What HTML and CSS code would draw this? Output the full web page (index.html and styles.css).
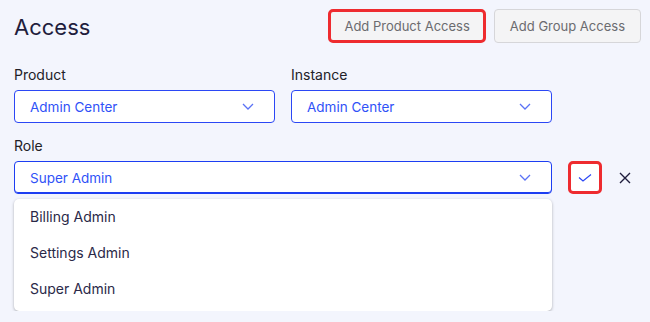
FILE: index.html
```html
<!DOCTYPE html>
<html lang="en">
<head>
    <meta charset="UTF-8">
    <title>Access</title>
    <link rel="stylesheet" href="styles.css">
</head>
<body>

    <!-- header: title + actions -->
    <div class="access-header">
        <h1 class="access-title">Access</h1>
        <div class="header-actions">
            <button class="btn btn-highlight">Add Product Access</button>
            <button class="btn">Add Group Access</button>
        </div>
    </div>

    <!-- product / instance -->
    <div class="field-row">
        <div class="field">
            <label class="field-label">Product</label>
            <div class="select">
                <span>Admin Center</span>
                <svg class="chevron" width="12" height="7" viewBox="0 0 12 7"><path d="M1 1l5 5 5-5" fill="none" stroke="currentColor" stroke-width="1.3"/></svg>
            </div>
        </div>
        <div class="field">
            <label class="field-label">Instance</label>
            <div class="select">
                <span>Admin Center</span>
                <svg class="chevron" width="12" height="7" viewBox="0 0 12 7"><path d="M1 1l5 5 5-5" fill="none" stroke="currentColor" stroke-width="1.3"/></svg>
            </div>
        </div>
    </div>

    <!-- role -->
    <label class="field-label role-label">Role</label>
    <div class="role-row">
        <div class="role-field">
            <div class="select select-open">
                <span>Super Admin</span>
                <svg class="chevron" width="12" height="7" viewBox="0 0 12 7"><path d="M1 1l5 5 5-5" fill="none" stroke="currentColor" stroke-width="1.3"/></svg>
            </div>
            <!-- open options list -->
            <ul class="dropdown">
                <li>Billing Admin</li>
                <li>Settings Admin</li>
                <li>Super Admin</li>
            </ul>
        </div>
        <button class="icon-btn icon-confirm">
            <svg width="14" height="8" viewBox="0 0 14 8"><path d="M1 3.5l4 3.5 8-6.5" fill="none" stroke="currentColor" stroke-width="1.2"/></svg>
        </button>
        <button class="icon-btn icon-cancel">
            <svg width="12" height="12" viewBox="0 0 12 12"><path d="M1 1l10 10M11 1L1 11" fill="none" stroke="currentColor" stroke-width="1.4"/></svg>
        </button>
    </div>

</body>
</html>
```

FILE: styles.css
```css
body {
    margin: 0;
    padding: 9px 9px 0 14px;
    background: #f3f5fd;
    font-family: Inter, "Noto Sans", sans-serif;
    color: #1f1d3d;
}

.access-header {
    display: flex;
    justify-content: space-between;
    align-items: flex-start;
}

.access-title {
    margin: 4px 0 0;
    font-size: 22px;
    font-weight: 400;
    line-height: 28px;
}

.header-actions {
    display: flex;
    gap: 8px;
    align-items: center;
}

.btn {
    height: 34px;
    padding: 0 15px;
    font-family: inherit;
    font-size: 13px;
    color: #6b6b6f;
    background: #f4f4f5;
    border: 1px solid #d6d6d9;
    border-radius: 4px;
}

.btn-highlight {
    padding: 0 13px;
    border: 3px solid #ee2b2f;
    border-radius: 5px;
}

.field-row {
    display: flex;
    gap: 16px;
    width: 538px;
    margin-top: 22px;
}

.field {
    flex: 1;
}

.field-label {
    display: block;
    font-size: 14px;
    line-height: 20px;
    color: #222127;
    margin-bottom: 5px;
}

.role-label {
    margin-top: 13px;
}

.select {
    display: flex;
    align-items: center;
    justify-content: space-between;
    box-sizing: border-box;
    height: 33px;
    padding: 0 20px 0 15px;
    border: 1px solid #2b47f5;
    border-radius: 4px;
    background: #fff;
    font-size: 13.5px;
    color: #2f52f7;
}

.select-open {
    border-color: #1d3ef2;
    box-shadow: inset 0 -1px 0 #1d3ef2;
}

.chevron {
    color: #5a72f5;
}

.role-row {
    display: flex;
    align-items: flex-start;
}

.role-field {
    width: 538px;
}

.dropdown {
    margin: 5px 0 0;
    padding: 0 0 4px;
    list-style: none;
    background: #fff;
    border-radius: 5px;
    box-shadow: 0 1px 3px rgba(0, 0, 0, 0.3);
}

.dropdown li {
    height: 36px;
    line-height: 36px;
    padding-left: 16px;
    font-size: 14px;
    color: #2a2948;
}

.icon-btn {
    display: flex;
    align-items: center;
    justify-content: center;
    padding: 0;
    background: none;
    border: none;
}

.icon-confirm {
    width: 34px;
    height: 33px;
    margin-left: 16px;
    background: #fff;
    border: 3px solid #ee2b2f;
    border-radius: 5px;
    color: #2b47f5;
}

.icon-cancel {
    width: 30px;
    height: 33px;
    margin-left: 8px;
    color: #1f1d3d;
}
```
